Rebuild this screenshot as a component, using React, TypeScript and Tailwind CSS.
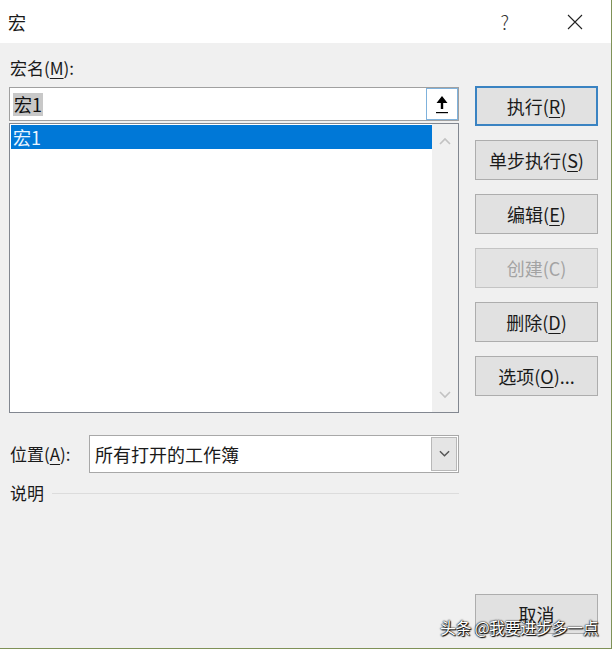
import React from "react";

const font = { fontFamily: '"Noto Sans CJK SC", "Noto Sans", sans-serif' };

function Btn({ children, def, disabled, className = "" }: { children: React.ReactNode; def?: boolean; disabled?: boolean; className?: string }) {
  return (
    <div
      className={
        "h-[40px] w-[123px] flex items-center justify-center text-[18px] leading-[24px] " +
        (def
          ? "border-2 border-[#3a83c2] bg-[#e1e1e1] text-[#1a1a1a] "
          : disabled
          ? "border border-[#c4c4c4] bg-[#e3e3e3] text-[#a3a3a3] "
          : "border border-[#adadad] bg-[#e1e1e1] text-[#1a1a1a] ") +
        className
      }
    >
      {children}
    </div>
  );
}

function U({ children }: { children: React.ReactNode }) {
  return <span className="underline decoration-1 underline-offset-[3px]">{children}</span>;
}

function Chevron({ up, className = "" }: { up?: boolean; className?: string }) {
  return (
    <svg width="12" height="8" viewBox="0 0 12 8" className={className}>
      <path d={up ? "M1 7 L6 2 L11 7" : "M1 1 L6 6 L11 1"} fill="none" stroke="currentColor" strokeWidth="1.6" />
    </svg>
  );
}

export default function App() {
  return (
    <div style={font} className="relative w-[612px] h-[649px] overflow-hidden bg-[#f0f0f0] border-r border-b border-[#7f9157] text-[#1a1a1a]">
      {/* Title bar */}
      <div className="h-[43px] bg-white flex items-center pl-[8px]">
        <span className="text-[18px] leading-[24px]">宏</span>
        <span className="ml-auto text-[19px] leading-[24px] text-[#333] font-light mr-[58px]">?</span>
        <svg width="16" height="16" viewBox="0 0 16 16" className="mr-[28px]">
          <path d="M1 1 L15 15 M15 1 L1 15" stroke="#222" strokeWidth="1.1" />
        </svg>
      </div>

      {/* Body */}
      <div className="flex pl-[9px]">
        {/* Left column */}
        <div className="w-[450px] flex flex-col">
          <div className="pt-[13px] pb-[7px] pl-[1px] text-[17px] leading-[24px]">
            宏名(<U>M</U>):
          </div>
          <div className="h-[34px] border border-[#a0a0a0] bg-white flex items-stretch">
            <div className="flex-1 flex items-center pl-[3px]">
              <span className="bg-[#c8c8c8] text-[18px] leading-[23px] px-[1px] text-[#111]">宏1</span>
            </div>
            <div className="w-[32px] border border-[#7fb2dc] flex flex-col items-center justify-center bg-white">
              <svg width="14" height="20" viewBox="0 0 14 20">
                <path d="M7 2 L12.5 9 L8.2 9 L8.2 15 L5.8 15 L5.8 9 L1.5 9 Z" fill="#000" />
                <rect x="1" y="18" width="12" height="1.2" fill="#000" />
              </svg>
            </div>
          </div>
          <div className="mt-[2px] h-[290px] border border-[#828790] bg-white flex">
            <div className="flex-1 pt-[1px] pl-[1px]">
              <div className="h-[24px] bg-[#0078d7] text-[#e8f4ff] text-[18px] leading-[24px] pl-[2px]">宏1</div>
            </div>
            <div className="w-[26px] bg-[#f0f0f0] flex flex-col items-center justify-between py-[13px] text-[#c2c2c2]">
              <Chevron up />
              <Chevron />
            </div>
          </div>

          <div className="mt-[22px] flex items-center">
            <div className="w-[80px] pl-[1px] text-[17px] leading-[24px]">
              位置(<U>A</U>):
            </div>
            <div className="flex-1 h-[38px] border border-[#a8a8a8] bg-white flex items-center pl-[5px] pr-[1px]">
              <span className="flex-1 text-[18px] leading-[24px]">所有打开的工作簿</span>
              <div className="w-[26px] h-[34px] bg-[#e5e5e5] border border-[#b8b8b8] flex items-center justify-center text-[#555]">
                <Chevron className="w-[11px]" />
              </div>
            </div>
          </div>

          <div className="mt-[9px] flex items-center">
            <span className="pl-[1px] text-[17px] leading-[22px]">说明</span>
            <div className="flex-1 ml-[8px] h-px bg-[#dcdcdc] mt-[1px]" />
          </div>
        </div>

        {/* Right column */}
        <div className="ml-[16px] pt-[43px] flex flex-col gap-[14px]">
          <Btn def>执行(<U>R</U>)</Btn>
          <Btn>单步执行(<U>S</U>)</Btn>
          <Btn>编辑(<U>E</U>)</Btn>
          <Btn disabled>创建(C)</Btn>
          <Btn>删除(<U>D</U>)</Btn>
          <Btn>选项(<U>O</U>)...</Btn>
          <Btn className="mt-[184px]">取消</Btn>
        </div>
      </div>

      {/* Watermark */}
      <div className="absolute left-[440px] top-[616px] text-[16px] leading-[22px] tracking-[-0.4px] text-white [text-shadow:0_0_1px_#000,0_0_2px_#000,1px_1px_1px_#000]">
        头条 @我要进步多一点
      </div>
    </div>
  );
}
